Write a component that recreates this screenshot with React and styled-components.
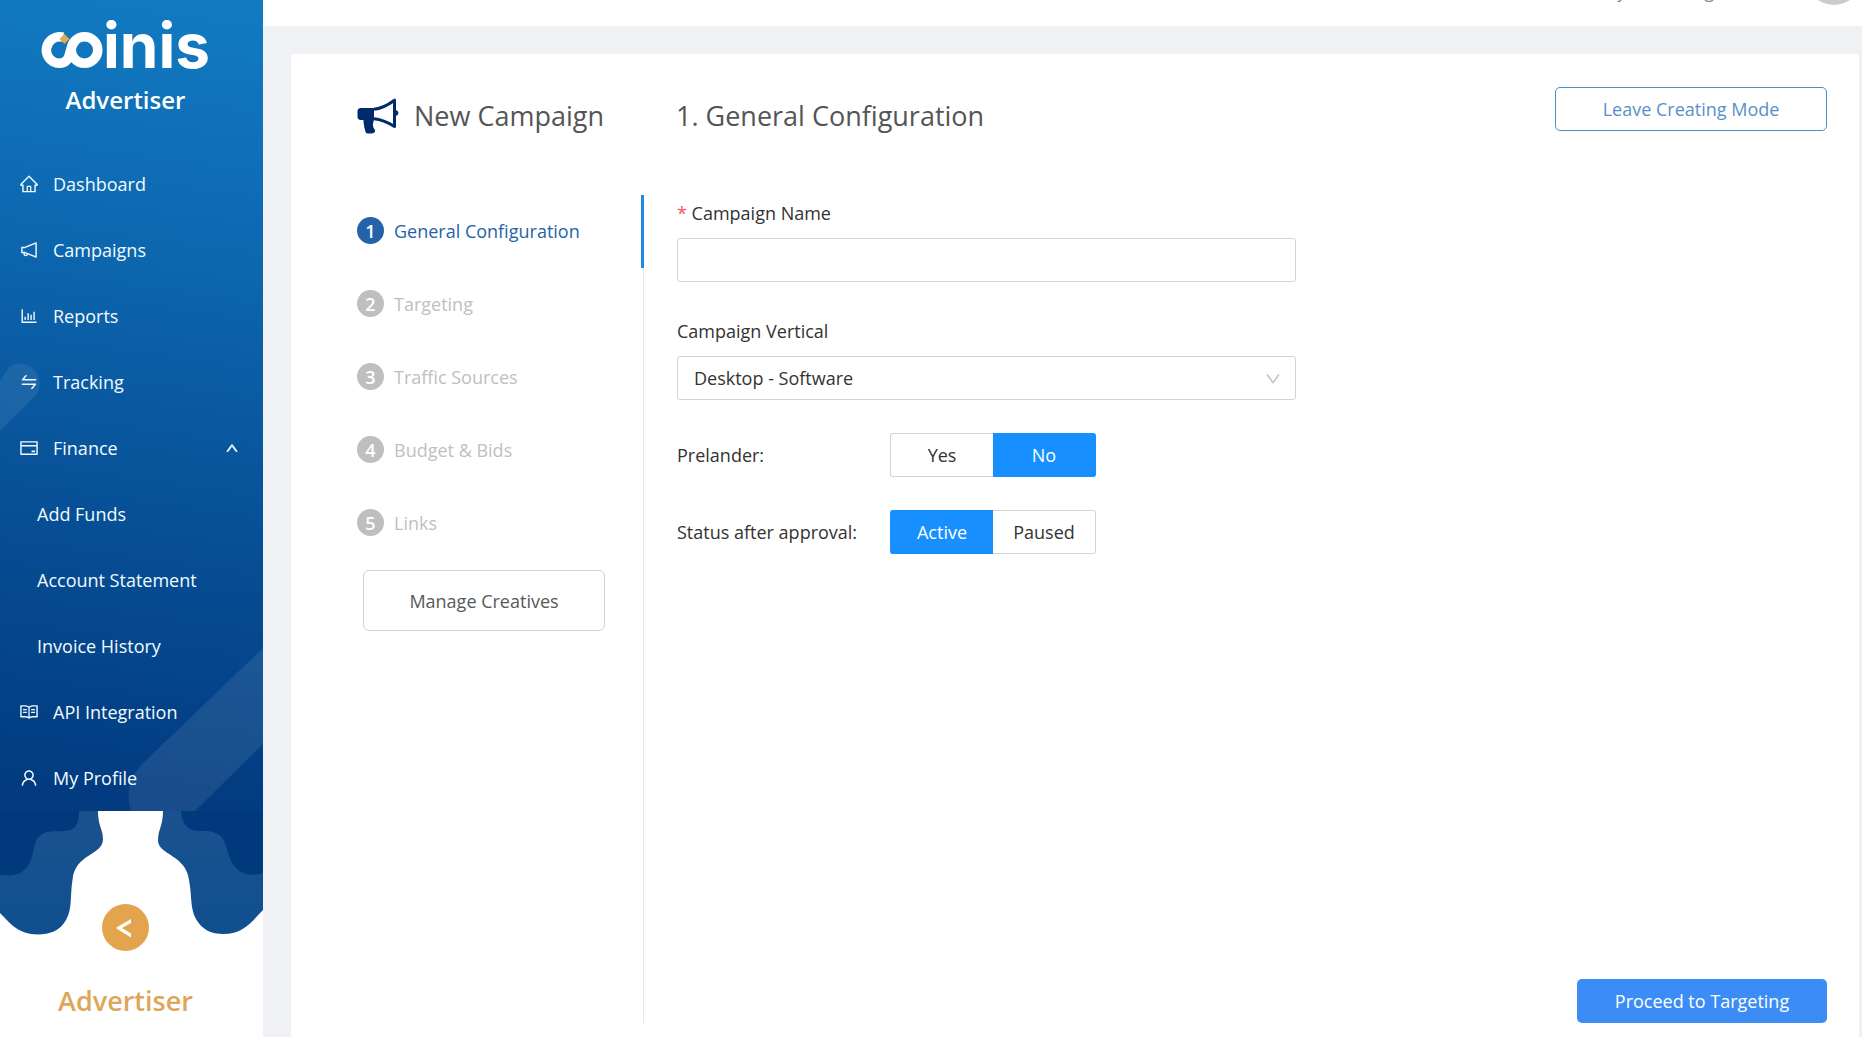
import React, { useState } from 'react';
import styled, { createGlobalStyle } from 'styled-components';
import {
    AiOutlineHome,
    AiOutlineNotification,
    AiOutlineBarChart,
    AiOutlineSwap,
    AiOutlineCreditCard,
    AiOutlineRead,
    AiOutlineUser,
    AiOutlineUp,
    AiOutlineDown,
} from 'react-icons/ai';

const menu = [
    { label: 'Dashboard', icon: AiOutlineHome },
    { label: 'Campaigns', icon: AiOutlineNotification },
    { label: 'Reports', icon: AiOutlineBarChart },
    { label: 'Tracking', icon: AiOutlineSwap },
    { label: 'Finance', icon: AiOutlineCreditCard, open: true },
    { label: 'Add Funds' },
    { label: 'Account Statement' },
    { label: 'Invoice History' },
    { label: 'API Integration', icon: AiOutlineRead },
    { label: 'My Profile', icon: AiOutlineUser },
];

const steps = ['General Configuration', 'Targeting', 'Traffic Sources', 'Budget & Bids', 'Links'];

const Logo = () => {
    return (
        <LogoWrapper>
            <svg width="62" height="36" viewBox="0 0 62 36" aria-hidden="true">
                <g fill="none" stroke="#fff" strokeWidth="9.500">
                    <circle cx="43.500" cy="18" r="13.250" />
                    <path d="M22 5.200 A13.250 13.250 0 1 0 18 31.250 C32 31.250 26 16 35 8" />
                </g>
                <path d="M23.500 2 L28.500 7 L23.500 12 L18.500 7 Z" fill="#e2a94f" />
            </svg>
            <LogoText>inis</LogoText>
        </LogoWrapper>
    );
};

const Megaphone = () => {
    return (
        <svg width="42" height="36" viewBox="0 0 42 36" aria-hidden="true">
            <path
                d="M4 10 H17 V22 C15.500 26 15.500 29 18 32 C18.500 34 17 35.500 14 35.500 H11 C9 35.500 8.500 34 8 32 C7 28.500 6.500 25 6.500 22 H4 C1.500 22 0.500 20.500 0.500 19 V13 C0.500 11 2 10 4 10 Z"
                fill="#012a6c"
            />
            <path
                d="M17 11.200 C25 10.500 31 7 37.500 2.200 V28.500 C31 24.500 25 21.500 17 20.800"
                fill="none"
                stroke="#012a6c"
                strokeWidth="3"
                strokeLinejoin="round"
            />
            <path d="M38 12 C42.500 12 42.500 18 38 18 Z" fill="#012a6c" />
        </svg>
    );
};

const Drips = () => {
    return (
        <svg width="100%" height="124" viewBox="0 0 263 124" preserveAspectRatio="none" aria-hidden="true">
            <defs>
                <linearGradient id="drip" x1="0" y1="0" x2="0" y2="1">
                    <stop offset="0" stopColor="#1a528f" />
                    <stop offset="1" stopColor="#104f8f" />
                </linearGradient>
            </defs>
            <path
                d="M0 0 H98 C98 15 103 18 103 28 C103 45 75 42 72.500 69 C70 84 72.500 98 66 109 C60 120 49 123.500 38 123.500 C18 123.500 10 112 0 102 Z"
                fill="url(#drip)"
            />
            <path
                d="M263 0 H163 C163 15 158 18 158 30 C159 44 186 44 189 69 C192 84 190 98 196 108 C202 119 212 123 223 123 C244 123 252 110 263 99 Z"
                fill="url(#drip)"
            />
            <path
                d="M0 0 H79 C79 14 75 20 64 20 C54 21 44 18 37 28 C32 38 34 47 27 56 C20 65 10 65 0 64 Z"
                fill="#003a7d"
            />
            <path
                d="M263 0 H181 C182 14 188 20 200 20 C210 20 220 20 225 32 C229 43 229 50 236 57 C244 65 254 65 263 62 Z"
                fill="#003a7d"
            />
        </svg>
    );
};

const Sidebar = () => {
    return (
        <SidebarWrapper>
            <SidebarTop>
                <Bands viewBox="0 0 263 811" preserveAspectRatio="none" aria-hidden="true">
                    <path d="M-20 414 L9 367 A20 20 0 0 1 37 394 L0 431 Z" fill="#fff" fillOpacity="0.08" />
                    <path d="M263 648 L141 765 C128 780 126 796 131 811 H195 L263 744 Z" fill="#fff" fillOpacity="0.09" />
                </Bands>
                <Brand>
                    <Logo />
                    <BrandRole>Advertiser</BrandRole>
                </Brand>
                <nav>
                    {menu.map(({ label, icon: Icon, open }) => (
                        <MenuItem key={label} href="#" $sub={!Icon}>
                            {Icon && <Icon size={20} />}
                            <span>{label}</span>
                            {open && <OpenArrow />}
                        </MenuItem>
                    ))}
                </nav>
            </SidebarTop>
            <Drips />
            <Collapse type="button" aria-label="Collapse menu">
                <svg width="16" height="20" viewBox="0 0 16 20" aria-hidden="true">
                    <path d="M15 1 V5 L6 10 L15 15.500 V19.500 L0.500 10.500 V9.500 Z" fill="#fff" />
                </svg>
            </Collapse>
            <FooterRole>Advertiser</FooterRole>
        </SidebarWrapper>
    );
};

const Toggle = ({ label, name, options, initial }) => {
    const [value, setValue] = useState(initial);
    return (
        <ToggleRow>
            <ToggleLegend id={`${name}-label`}>{label}</ToggleLegend>
            <ToggleGroup role="radiogroup" aria-labelledby={`${name}-label`}>
                {options.map((option) => (
                    <ToggleOption key={option} $checked={option === value}>
                        <input
                            type="radio"
                            name={name}
                            value={option}
                            checked={option === value}
                            onChange={() => setValue(option)}
                        />
                        {option}
                    </ToggleOption>
                ))}
            </ToggleGroup>
        </ToggleRow>
    );
};

const ConfigurationForm = () => {
    return (
        <Form onSubmit={(e) => e.preventDefault()}>
            <Label htmlFor="campaign-name">
                <Required>*</Required> Campaign Name
            </Label>
            <Input id="campaign-name" type="text" />
            <Label htmlFor="campaign-vertical">Campaign Vertical</Label>
            <SelectWrapper>
                <Select id="campaign-vertical" defaultValue="software">
                    <option value="software">Desktop - Software</option>
                </Select>
                <SelectArrow />
            </SelectWrapper>
            <Toggle label="Prelander:" name="prelander" options={['Yes', 'No']} initial="No" />
            <Toggle label="Status after approval:" name="status" options={['Active', 'Paused']} initial="Active" />
        </Form>
    );
};

const App = () => {
    return (
        <Page>
            <GlobalStyle />
            <Sidebar />
            <Main>
                <TopBar>
                    <UserName>
                        <span>y</span>
                        <span>g</span>
                    </UserName>
                    <Avatar />
                </TopBar>
                <Card>
                    <CardHeader>
                        <CampaignTitle>
                            <Megaphone />
                            New Campaign
                        </CampaignTitle>
                        <StepTitle>1. General Configuration</StepTitle>
                        <LeaveButton type="button">Leave Creating Mode</LeaveButton>
                    </CardHeader>
                    <CardBody>
                        <Steps>
                            {steps.map((step, i) => (
                                <Step key={step} $active={i === 0}>
                                    <StepNumber $active={i === 0}>{i + 1}</StepNumber>
                                    {step}
                                </Step>
                            ))}
                            <ManageButton type="button">Manage Creatives</ManageButton>
                        </Steps>
                        <Content>
                            <ConfigurationForm />
                            <ProceedButton type="button">Proceed to Targeting</ProceedButton>
                        </Content>
                    </CardBody>
                </Card>
            </Main>
        </Page>
    );
};

const GlobalStyle = createGlobalStyle`
    * {
        box-sizing: border-box;
    }
    body {
        margin: 0;
        background-color: #eff1f5;
        color: #333;
        font-family: 'Open Sans', 'Noto Sans', sans-serif;
        font-size: 18px;
        line-height: 26px;
    }
    button, input, select {
        font: inherit;
        color: inherit;
    }
    button {
        cursor: pointer;
    }
`;

const Page = styled.div`
    display: flex;
    min-height: 100vh;
`;

const SidebarWrapper = styled.aside`
    flex: 0 0 263px;
    display: flex;
    flex-direction: column;
    align-items: center;
    background-color: #fff;
`;

const SidebarTop = styled.div`
    position: relative;
    width: 100%;
    background: linear-gradient(188deg, #127bc2 0%, #0d68b0 30%, #08539a 58%, #023b80 96%);
`;

const Bands = styled.svg`
    position: absolute;
    inset: 0;
    width: 100%;
    height: 100%;
`;

const Brand = styled.div`
    position: relative;
    height: 151px;
    padding: 0 12px 0 0;
    display: flex;
    flex-direction: column;
    align-items: center;
    color: #fff;
`;

const LogoWrapper = styled.div`
    display: flex;
    align-items: baseline;
    height: 87px;
`;

const LogoText = styled.span`
    font-family: Inter, sans-serif;
    font-weight: 700;
    font-size: 62px;
    line-height: 92px;
`;

const BrandRole = styled.div`
    font-size: 24px;
    font-weight: 600;
`;

const MenuItem = styled.a`
    position: relative;
    height: 66px;
    padding: 0 24px 0 ${(props) => (props.$sub ? '37px' : '19px')};
    display: flex;
    align-items: center;
    gap: 14px;
    color: #f2fbff;
    text-decoration: none;
`;

const OpenArrow = styled(AiOutlineUp)`
    margin-left: auto;
    width: 14px;
    height: 14px;
    stroke: currentColor;
    stroke-width: 60px;
`;

const Collapse = styled.button`
    width: 47px;
    height: 47px;
    margin: -31px 12px 0 0;
    padding: 0 4px 0 0;
    display: flex;
    align-items: center;
    justify-content: center;
    border: none;
    border-radius: 50%;
    background-color: #e2a54d;
`;

const FooterRole = styled.div`
    margin: 32px 12px 0 0;
    color: #dea658;
    font-size: 27px;
    line-height: 36px;
    font-weight: 600;
`;

const Main = styled.main`
    flex: 1;
    min-width: 0;
    display: flex;
    flex-direction: column;
`;

/* only the lower edge of the bar stays in view */
const TopBar = styled.header`
    height: 26px;
    display: flex;
    justify-content: flex-end;
    align-items: flex-start;
    overflow: hidden;
    background-color: #fff;
    color: #888;
`;

const UserName = styled.div`
    display: flex;
    gap: 78px;
    margin: -22px 92px 0 0;
`;

const Avatar = styled.div`
    width: 56px;
    height: 56px;
    margin-top: -51px;
    border-radius: 50%;
    background-color: #cbcbcb;
`;

const Card = styled.section`
    flex: 1;
    margin: 28px 3px 0 28px;
    padding: 33px 32px 14px 66px;
    display: flex;
    flex-direction: column;
    background-color: #fff;
    border-radius: 3px 3px 0 0;
`;

const CardHeader = styled.div`
    height: 108px;
    display: flex;
    align-items: flex-start;
    color: #555;
`;

const CampaignTitle = styled.h1`
    width: 319px;
    margin: 0;
    display: flex;
    align-items: center;
    gap: 15px;
    font-size: 27px;
    font-weight: 400;
    line-height: 58px;
`;

const StepTitle = styled.h2`
    margin: 0;
    font-size: 27px;
    font-weight: 400;
    line-height: 58px;
`;

const LeaveButton = styled.button`
    width: 272px;
    height: 44px;
    margin-left: auto;
    border: 1px solid #4a90c8;
    border-radius: 5px;
    background-color: #fff;
    color: #5a8fcb;
`;

const CardBody = styled.div`
    flex: 1;
    display: flex;
`;

const Steps = styled.div`
    width: 287px;
    border-right: 1px solid #e8e8e8;
`;

const Step = styled.div`
    height: 73px;
    margin-right: -1px;
    padding-bottom: 2px;
    display: flex;
    align-items: center;
    gap: 10px;
    color: ${(props) => (props.$active ? '#2563a8' : '#bfbfbf')};
    border-right: ${(props) => (props.$active ? '3px solid #1f8ae0' : 'none')};
`;

const StepNumber = styled.span`
    width: 27px;
    height: 27px;
    display: flex;
    align-items: center;
    justify-content: center;
    border-radius: 50%;
    background-color: ${(props) => (props.$active ? '#2563a8' : '#bfbfbf')};
    color: #fff;
    font-size: 18px;
    font-weight: 600;
`;

const ManageButton = styled.button`
    width: 242px;
    height: 61px;
    margin: 10px 0 0 6px;
    border: 1px solid #d0d0d0;
    border-radius: 6px;
    background-color: #fff;
    color: #595959;
`;

const Content = styled.div`
    flex: 1;
    padding-left: 33px;
    display: flex;
    flex-direction: column;
    justify-content: space-between;
`;

const Form = styled.form`
    max-width: 619px;
    padding-top: 5px;
`;

const Label = styled.label`
    display: block;
    margin-bottom: 12px;
`;

const Required = styled.span`
    color: #f5535b;
`;

const Input = styled.input`
    display: block;
    width: 100%;
    height: 44px;
    margin-bottom: 36px;
    padding: 0 16px;
    border: 1px solid #d4d4d4;
    border-radius: 3px;
    background-color: #fff;
`;

const SelectWrapper = styled.div`
    position: relative;
    margin-bottom: 33px;
`;

const Select = styled.select`
    display: block;
    width: 100%;
    height: 44px;
    padding: 0 44px 0 16px;
    border: 1px solid #d4d4d4;
    border-radius: 3px;
    background-color: #fff;
    appearance: none;
`;

const SelectArrow = styled(AiOutlineDown)`
    position: absolute;
    top: 14px;
    right: 14px;
    width: 18px;
    height: 18px;
    color: #bfbfbf;
    pointer-events: none;
`;

const ToggleRow = styled.div`
    display: flex;
    align-items: center;
    margin-bottom: 33px;
`;

const ToggleLegend = styled.div`
    width: 213px;
`;

const ToggleGroup = styled.div`
    width: 206px;
    height: 44px;
    display: grid;
    grid-template-columns: 1fr 1fr;
`;

const ToggleOption = styled.label`
    display: flex;
    align-items: center;
    justify-content: center;
    border: 1px solid ${(props) => (props.$checked ? '#188fff' : '#d4d4d4')};
    background-color: ${(props) => (props.$checked ? '#188fff' : '#fff')};
    color: ${(props) => (props.$checked ? '#fff' : '#333')};
    cursor: pointer;
    &:first-child {
        border-right: none;
        border-radius: 3px 0 0 3px;
    }
    &:last-child {
        border-left: none;
        border-radius: 0 3px 3px 0;
    }
    input {
        position: absolute;
        opacity: 0;
        pointer-events: none;
    }
`;

const ProceedButton = styled.button`
    align-self: flex-end;
    width: 250px;
    height: 44px;
    border: none;
    border-radius: 5px;
    background-color: #3b8df5;
    color: #fff;
`;

export default App;
